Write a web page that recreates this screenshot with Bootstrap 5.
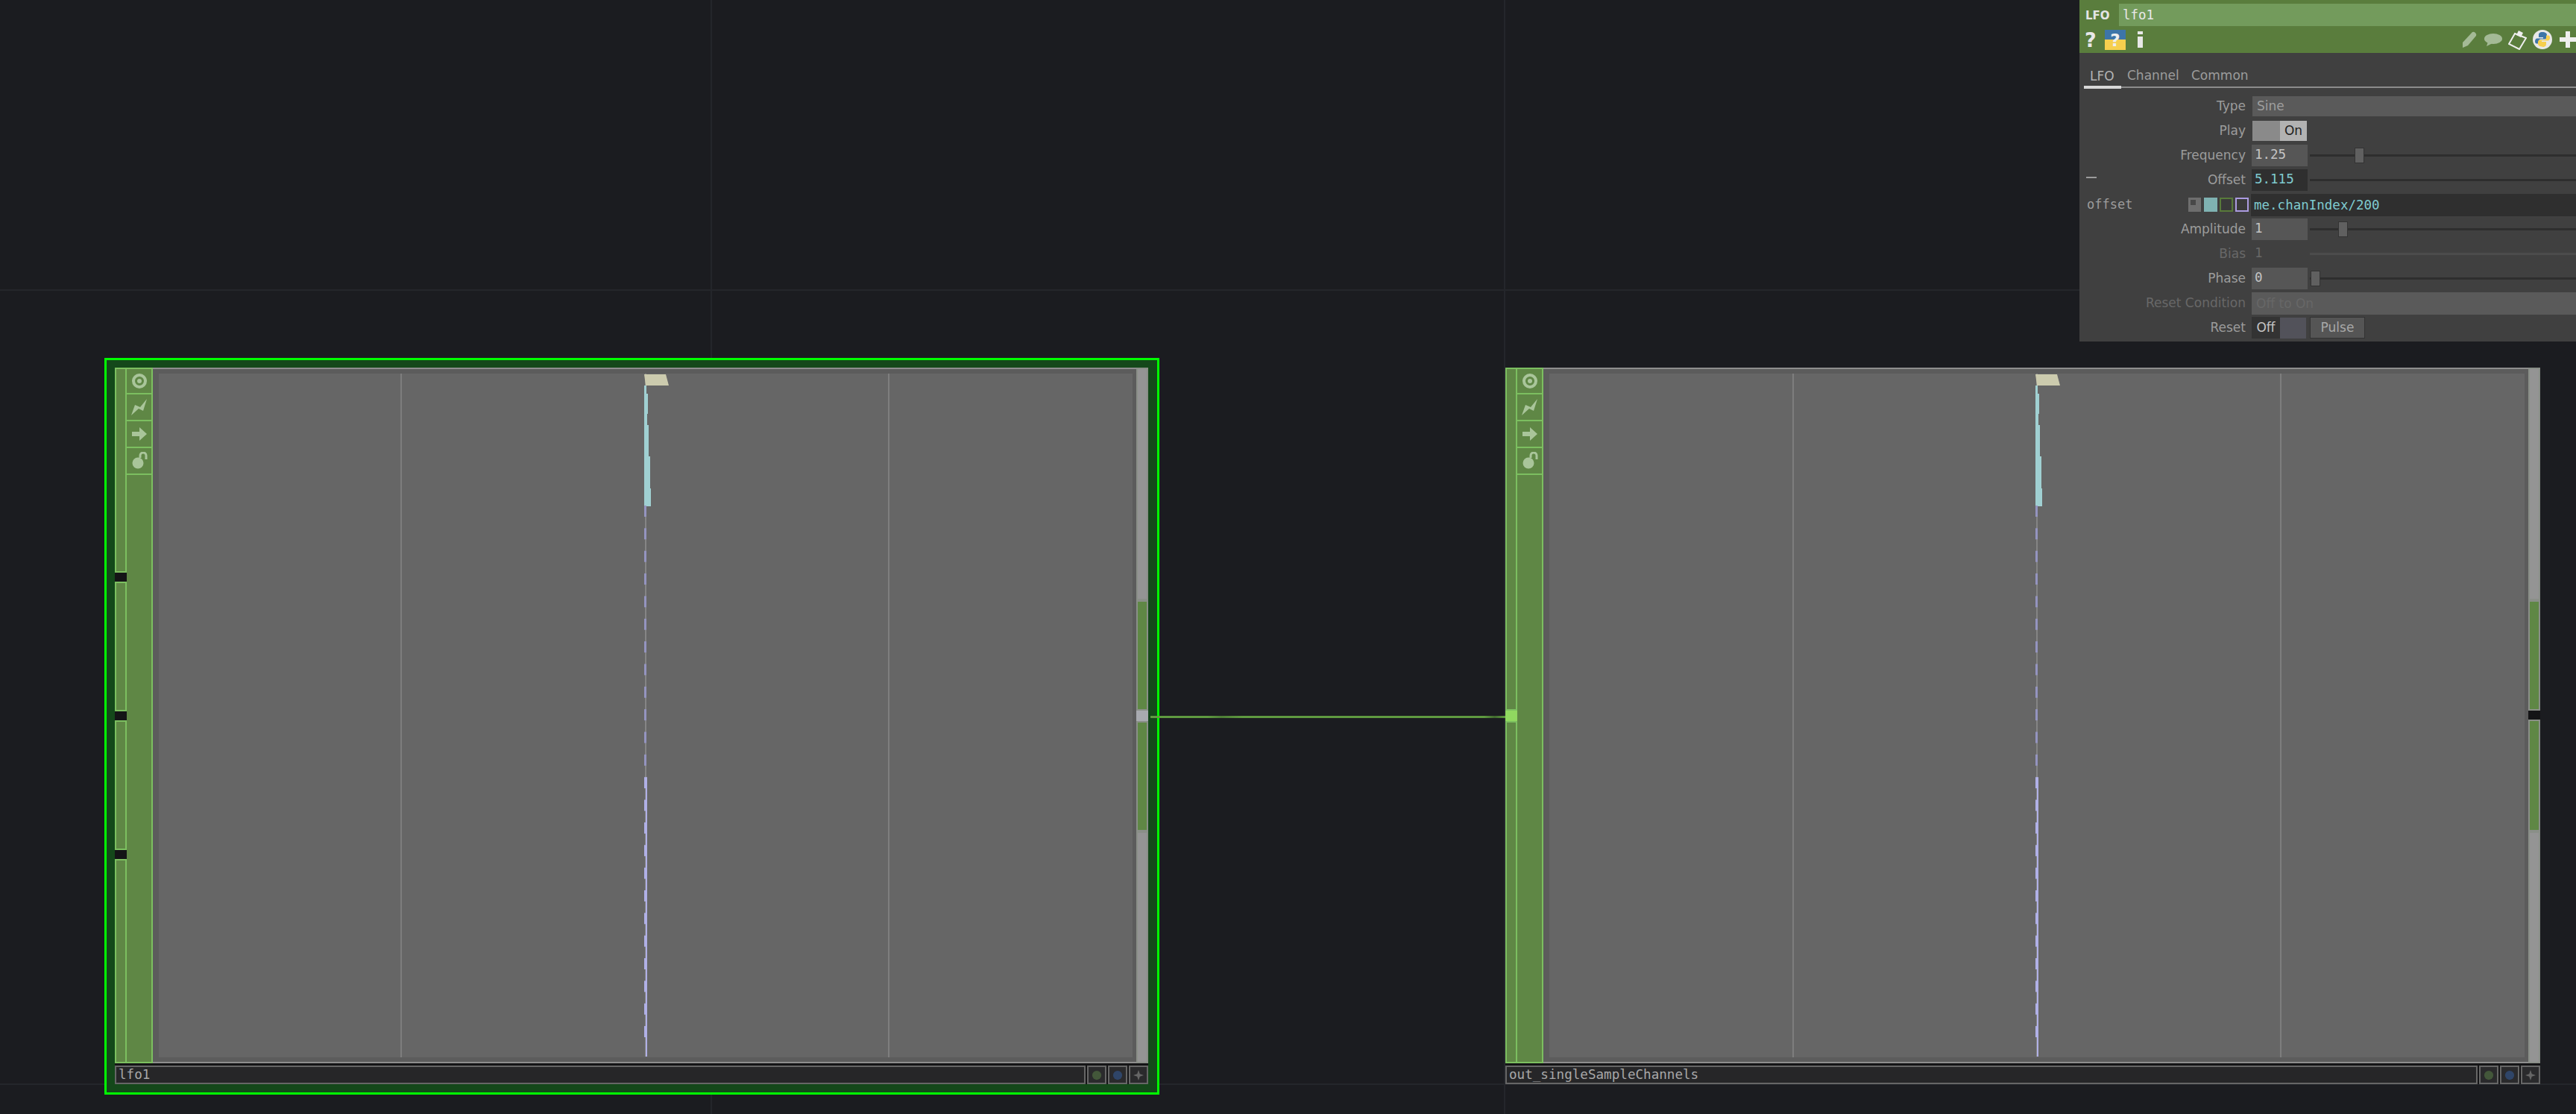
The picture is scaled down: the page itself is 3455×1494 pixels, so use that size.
<!DOCTYPE html>
<html lang="en">
<head>
  <meta charset="UTF-8">
  <title>LFO network</title>
  <link href="https://cdn.jsdelivr.net/npm/bootstrap@5.3.0/dist/css/bootstrap.min.css" rel="stylesheet">
  <style>
    html, body { height: 100%; margin: 0; overflow: hidden; }
    body { background: #1b1c20; }
    .canvas-area { width: 3455px; height: 1494px; position: relative; overflow: hidden; }
    .grid-line { position: absolute; background: #24262b; }
    .grid-v { width: 2px; top: 0; bottom: 0; }
    .grid-h { height: 2px; left: 0; right: 0; }

    /* nodes */
    .op-select { position: absolute; left: 140px; top: 480px; width: 1415px; height: 988px; border: 3px solid #00ff00; background: #14481a; }
    .op-node { position: absolute; top: 493px; height: 961px; display: flex; flex-direction: column; background: #141416; }
    .op-body { height: 933px; display: flex; }
    .in-strip, .out-strip { width: 16px; display: flex; flex-direction: column; flex: none; }
    .seg { flex: none; border: 2px solid #7cbf60; background: #5f8745; }
    .seg-gap { flex: none; height: 12px; background: #141416; }
    .seg-conn { flex: none; height: 14px; background: #90d860; }
    .seg-conn-off { flex: none; height: 14px; background: #a8aab0; }
    .out-strip .seg { border-color: #8a8f88; }
    .seg-gray { background: #949494; border-color: #a0a0a0; }
    .flag-col { width: 35px; flex: none; display: flex; flex-direction: column; background: #5f8745; border: 2px solid #7cbf60; border-left-width: 0; }
    .flag-btn { height: 36px; flex: none; display: flex; align-items: center; justify-content: center; border-bottom: 2px solid #7cbf60; }
    .flag-btn:first-child { height: 34px; }
    .flag-btn svg { width: 24px; height: 24px; }
    .viewer { flex: 1 1 auto; position: relative; background: #5c5c5c; border-top: 2px solid #8e8e8e; border-bottom: 2px solid #8e8e8e; padding: 6px 5px 6px 8px; }
    .viewer-in { height: 100%; background: #666; position: relative; }
    .div-line { position: absolute; top: 0; bottom: 0; width: 2px; background: #7e7e7e; }
    .chan-svg { position: absolute; left: 0; top: 0; width: 40px; height: 920px; }
    .name-row { display: flex; height: 28px; padding-top: 3px; gap: 2px; }
    .name-box { flex: 1 1 auto; background: #262628; border: 2px solid #666; color: #a8a8a8; font: 17.6px/21px "DejaVu Sans Mono", monospace; padding-left: 3px; }
    .name-btn { width: 26px; flex: none; background: #2a2a2c; border: 2px solid #666; display: flex; align-items: center; justify-content: center; }
    .name-btn svg { width: 14px; height: 14px; }
    .wire { position: absolute; left: 1543px; width: 476px; top: 960px; height: 3px; background: linear-gradient(90deg, #5f9a40 0%, #5f9a40 16%, #4d7d36 20%, #5f9a40 26%, #5f9a40 94%, #41682f 97%, #5f9a40 100%); }

    /* parameter panel */
    .par-panel { position: absolute; left: 2789px; top: 0; width: 666px; height: 458px; background: #404040; font-family: "DejaVu Sans", sans-serif; font-size: 17px; color: #9c9c9c; }
    .par-head { height: 71px; background: #5a7d3d; }
    .par-title { height: 35px; display: flex; padding-top: 5px; }
    .par-type { width: 53px; color: #e4e4e4; font-weight: 600; font-size: 15px; line-height: 32px; padding-left: 8px; }
    .par-name { flex: 1 1 auto; background: #739b5c; color: #e8e8e8; font: 17.5px/30px "DejaVu Sans Mono", monospace; padding-left: 5px; }
    .par-tools { height: 36px; display: flex; align-items: center; padding: 0 0 0 7px; }
    .par-tools svg { flex: none; }
    .tool-q { width: 27px; color: #e8e8e8; font-weight: 700; font-size: 27px; line-height: 1; }
    .par-tabs { height: 47px; display: flex; align-items: flex-end; padding-left: 6px; position: relative; }
    .par-tab { padding: 0 0 7px 8px; line-height: 20px; width: 50px; flex: none; }
    .par-tab-active { color: #b4b4b4; border-bottom: 4px solid #d8d8d8; padding-bottom: 3px; margin-bottom: -1px; }
    .tab-rule { height: 2px; background: #8c8c8c; margin-left: 6px; margin-top: -2px; }
    .par-rows { padding-top: 8px; }
    .par-row { height: 33px; display: flex; align-items: center; }
    .par-label { width: 224px; flex: none; text-align: right; padding-right: 1px; }
    .par-dim { color: #686868; }
    .par-field { flex: 1 1 auto; height: 27px; background: #5a5a5a; color: #9e9e9e; padding-left: 6px; line-height: 27px; margin-left: 8px; }
    .par-field-dim { height: 30px; margin-left: 7px; color: #676767; line-height: 30px; }
    .par-num { width: 75px; height: 29px; flex: none; background: #565656; color: #c4c4c4; font: 17.5px/27px "DejaVu Sans Mono", monospace; padding-left: 4px; margin-left: 7px; }
    .par-num-expr { background: #2f2f2f; color: #7fcbd0; }
    .par-num-dim { background: transparent; color: #686868; }
    .par-track { flex: 1 1 auto; position: relative; height: 3px; margin-left: 3px; background: #2e2e2e; }
    .par-track-dim { background: #4c4c4c; }
    .par-thumb { position: absolute; top: -9px; width: 13px; height: 21px; background: #606060; border: 1px solid #333; }
    .toggle-off { width: 37px; height: 27px; margin-left: 8px; background: #8a8a8a; }
    .toggle-on { width: 36px; height: 27px; background: #b2b2b2; color: #222; text-align: center; line-height: 27px; }
    .expr-label { width: 146px; flex: none; padding-left: 10px; font-family: "DejaVu Sans Mono", monospace; }
    .expr-boxes { width: 84px; flex: none; display: flex; }
    .expr-box { width: 18px; height: 19px; flex: none; margin-right: 3px; border: 2px solid; }
    .expr-input { flex: 1 1 auto; height: 30px; background: #2f2f2f; color: #7fcbd0; font: 17.5px/30px "DejaVu Sans Mono", monospace; padding-left: 4px; }
    .reset-off { width: 38px; height: 29px; margin-left: 7px; background: #333; color: #c4c4c4; text-align: center; line-height: 29px; }
    .reset-sw { width: 35px; height: 28px; background: #52525a; }
    .reset-pulse { width: 74px; height: 29px; margin-left: 5px; background: #555; border: 1px solid #333; color: #a8a8a8; text-align: center; line-height: 27px; }
  </style>
</head>
<body>
  <div class="canvas-area" id="net">
    <div class="grid-line grid-v" style="left: 953px"></div>
    <div class="grid-line grid-v" style="left: 2017px"></div>
    <div class="grid-line grid-h" style="top: 388px"></div>
    <div class="grid-line grid-h" style="top: 1453px"></div>
    <div class="op-select"></div>
    <div class="wire"></div>

    <!-- Parameter panel -->
    <div class="par-panel">
      <div class="par-head">
        <div class="par-title"><div class="par-type">LFO</div><div class="par-name">lfo1</div></div>
        <div class="par-tools">
          <span class="tool-q">?</span>
          <svg width="28" height="27" viewBox="0 0 28 27"><rect width="28" height="13" fill="#3d75a8"/><rect y="13" width="28" height="14" fill="#f6cf4e"/><text x="14" y="22" text-anchor="middle" font-family="DejaVu Sans" font-weight="700" font-size="23" fill="#eee">?</text></svg>
          <svg class="ms-3" width="7" height="22" viewBox="0 0 7 22"><rect width="7" height="4" fill="#e8e8e8"/><rect y="7" width="7" height="15" fill="#e8e8e8"/></svg>
          <div class="flex-grow-1"></div>
          <svg width="20" height="22" viewBox="0 0 20 22"><path d="M14 1q2-1 4 1t1 4L8 19l-7 3 0-7z" fill="#a4ba96"/></svg>
          <svg style="margin-left:9px" width="25" height="17" viewBox="0 0 25 17"><ellipse cx="13" cy="7" rx="12" ry="7" fill="#a4ba96"/><path d="M6 11l-2 6 8-4z" fill="#a4ba96"/></svg>
          <svg style="margin-left:8px" width="25" height="28" viewBox="0 0 25 28"><path d="M9 6l15 6-9 15-14-7z" fill="none" stroke="#eee" stroke-width="2"/><path d="M14 2l6 3-3 6-6-3z" fill="#eee"/></svg>
          <svg style="margin-left:8px" width="26" height="26" viewBox="0 0 26 26"><circle cx="13" cy="13" r="13" fill="#e8e8e8"/><path d="M13 3c-4 0-5 2-5 4v3h6v1.500H6c-2 0-3 2-3 4s1 3 2 3h3v-3c0-2 1-3 3-3h5c2 0 3-1 3-3V7c0-2-2-4-6-4z" fill="#3d75a8"/><path d="M13 23c4 0 5-2 5-4v-3h-6v-1.500h8c2 0 3-2 3-4s-1-3-2-3h-3v3c0 2-1 3-3 3h-5c-2 0-3 1-3 3v2c0 2 2 4 6 4z" fill="#f6cf4e"/></svg>
          <svg style="margin-left:10px" width="22" height="22" viewBox="0 0 22 22"><path d="M8 0h6v8h8v6h-8v8H8v-8H0V8h8z" fill="#eee"/></svg>
        </div>
      </div>
      <div class="par-tabs">
        <div class="par-tab par-tab-active">LFO</div>
        <div class="par-tab" style="width:86px">Channel</div>
        <div class="par-tab" style="width:90px">Common</div>
      </div>
      <div class="tab-rule"></div>
      <div class="par-rows">
        <div class="par-row"><div class="par-label">Type</div><div class="par-field">Sine</div></div>
        <div class="par-row"><div class="par-label">Play</div><div class="toggle-off"></div><div class="toggle-on">On</div></div>
        <div class="par-row"><div class="par-label">Frequency</div><div class="par-num">1.25</div><div class="par-track"><div class="par-thumb" style="left: 60px"></div></div></div>
        <div class="par-row"><div class="par-label">Offset</div><div class="par-num par-num-expr">5.115</div><div class="par-track"></div></div>
        <div class="par-row">
          <div class="expr-label">offset</div>
          <div class="expr-boxes">
            <svg class="me-1" width="17" height="19" viewBox="0 0 17 19"><rect width="17" height="19" fill="#6e6e6e"/><path d="M3 3h7v7H3z" fill="#484848"/></svg>
            <div class="expr-box" style="background:#7fb2b2;border-color:#7fb2b2"></div>
            <div class="expr-box" style="background:#3a3a3a;border-color:#587a3a"></div>
            <div class="expr-box" style="background:#3a3a3a;border-color:#ab9be0"></div>
          </div>
          <div class="expr-input">me.chanIndex/200</div>
        </div>
        <div class="par-row"><div class="par-label">Amplitude</div><div class="par-num">1</div><div class="par-track"><div class="par-thumb" style="left: 38px"></div></div></div>
        <div class="par-row"><div class="par-label par-dim">Bias</div><div class="par-num par-num-dim">1</div><div class="par-track par-track-dim"></div></div>
        <div class="par-row"><div class="par-label">Phase</div><div class="par-num">0</div><div class="par-track"><div class="par-thumb" style="left: 1px"></div></div></div>
        <div class="par-row"><div class="par-label par-dim">Reset Condition</div><div class="par-field par-field-dim">Off to On</div></div>
        <div class="par-row"><div class="par-label">Reset</div><div class="reset-off">Off</div><div class="reset-sw"></div><div class="reset-pulse">Pulse</div></div>
      </div>
    </div>
    <!-- Dash bar that runs over the panel's left edge -->
    <div class="position-absolute" style="left: 2798px; top: 237px; width: 14px; height: 2px; background: #9c9c9c"></div>
  </div>

  <script src="https://cdn.jsdelivr.net/npm/bootstrap@5.3.0/dist/js/bootstrap.bundle.min.js"></script>
  <script>
    // Flag icons down the side of each node
    const flagIcons = `
      <div class="flag-btn"><svg viewBox="0 0 24 24"><circle cx="12" cy="12" r="8" fill="none" stroke="#a9c59a" stroke-width="4"/><circle cx="12" cy="12" r="3" fill="#a9c59a"/></svg></div>
      <div class="flag-btn"><svg viewBox="0 0 24 24"><path d="M22 1L17 17 11 14 1 23 6 9 13 12z" fill="#a9c59a"/></svg></div>
      <div class="flag-btn"><svg viewBox="0 0 24 24"><path d="M2 9h10V3l10 9-10 9v-6H2z" fill="#a9c59a"/></svg></div>
      <div class="flag-btn"><svg viewBox="0 0 24 24"><circle cx="10" cy="15" r="7.500" fill="#a9c59a"/><path d="M13 8V5a4 4 0 0 1 8 0v5" fill="none" stroke="#a9c59a" stroke-width="3"/></svg></div>`;

    // Channel trace, one copy per viewer: flag, cyan ramp, then purple dashes
    function channelTrace() {
      let dashes = '';
      for (let k = 0; k < 24; k++) {
        const y = 177 + 30.35 * k;
        const bright = y > 540;
        dashes += `<rect x="0" y="${y}" width="${bright ? 4 : 3}" height="15" fill="${bright ? '#b0b0e6' : '#9494c0'}"/>`;
      }
      return `<svg class="chan-svg" viewBox="0 0 40 920">
        <rect x="1" y="0" width="2" height="916" fill="#858585"/>
        <path d="M0 16h3v11h-3zM0 27h5v27h-5zM0 54h4v15h-4zM0 69h6v42h-6zM0 111h8v43h-8zM0 154h9v24h-9z" fill="#a0d0d2"/>
        <rect x="2" y="544" width="2" height="372" fill="#b0b0e6"/>
        ${dashes}
        <path d="M0 1h29l4 15H2z" fill="#cccbae"/>
      </svg>`;
    }

    const inSeg = h => `<div class="seg" style="height:${h}px"></div>`;
    const outSeg = (h, gray) => `<div class="seg${gray ? ' seg-gray' : ''}" style="height:${h}px"></div>`;

    const nodes = [
      {
        name: 'lfo1', left: 154, width: 1386, chan: 651, lines: [324, 978],
        inStrip: inSeg(275) + '<div class="seg-gap"></div>' + inSeg(174) + '<div class="seg-gap"></div>' + inSeg(174) + '<div class="seg-gap"></div>' + inSeg(274),
        outStrip: outSeg(312, true) + outSeg(148) + '<div class="seg-conn-off"></div>' + outSeg(148) + outSeg(311, true)
      },
      {
        name: 'out_singleSampleChannels', left: 2019, width: 1388, chan: 652, lines: [326, 980],
        inStrip: inSeg(460) + '<div class="seg-conn"></div>' + inSeg(459),
        outStrip: outSeg(312, true) + outSeg(148) + '<div class="seg-gap"></div>' + outSeg(150) + outSeg(311, true)
      }
    ];

    const net = document.getElementById('net');
    nodes.forEach(node => {
      net.insertAdjacentHTML('beforeend', `
        <div class="op-node" style="left:${node.left}px;width:${node.width}px">
          <div class="op-body">
            <div class="in-strip">${node.inStrip}</div>
            <div class="flag-col">${flagIcons}</div>
            <div class="viewer">
              <div class="viewer-in">
                ${node.lines.map(x => `<div class="div-line" style="left:${x}px"></div>`).join('')}
                <div class="position-absolute top-0 bottom-0" style="left:${node.chan}px">${channelTrace()}</div>
              </div>
            </div>
            <div class="out-strip">${node.outStrip}</div>
          </div>
          <div class="name-row">
            <div class="name-box">${node.name}</div>
            <div class="name-btn"><svg viewBox="0 0 16 16"><circle cx="8" cy="8" r="7" fill="#43573a"/></svg></div>
            <div class="name-btn"><svg viewBox="0 0 16 16"><circle cx="8" cy="8" r="7" fill="#2f4568"/></svg></div>
            <div class="name-btn"><svg viewBox="0 0 16 16"><path d="M8 0l2 6 6 2-6 2-2 6-2-6-6-2 6-2z" fill="#666"/></svg></div>
          </div>
        </div>`);
    });
  </script>
</body>
</html>
